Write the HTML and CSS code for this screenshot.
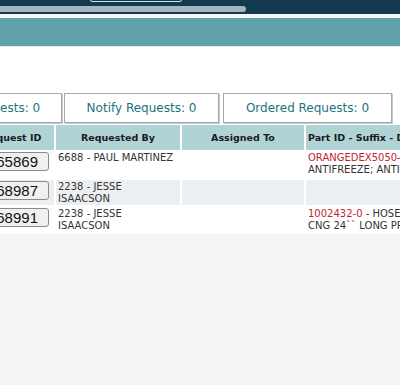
FILE: index.html
```html
<!DOCTYPE html>
<html lang="en">
<head>
    <meta charset="UTF-8">
    <meta name="viewport" content="width=device-width, initial-scale=1.0">
    <title>Part Requests</title>
    <link rel="stylesheet" href="styles.css">
</head>
<body>
    <header class="topbar">
        <div class="search-box"></div>
        <div class="scroll-thumb"></div>
    </header>
    <div class="band"></div>

    <main class="panel">
        <div class="tabs">
            <div class="tab tab-open">Open Requests: 0</div>
            <div class="tab tab-notify">Notify Requests: 0</div>
            <div class="tab tab-ordered">Ordered Requests: 0</div>
        </div>

        <table class="grid">
            <thead>
                <tr>
                    <th class="col-id">Request ID</th>
                    <th class="col-by">Requested By</th>
                    <th class="col-to">Assigned To</th>
                    <th class="col-part">Part ID - Suffix - Description</th>
                </tr>
            </thead>
            <tbody>
                <tr class="row-a">
                    <td><button class="id-btn">65869</button></td>
                    <td>6688 - PAUL MARTINEZ</td>
                    <td></td>
                    <td><span class="part">ORANGEDEX5050-0</span> - COOLANT<br>ANTIFREEZE; ANTIFREEZE</td>
                </tr>
                <tr class="row-b">
                    <td><button class="id-btn">68987</button></td>
                    <td>2238 - JESSE<br>ISAACSON</td>
                    <td></td>
                    <td></td>
                </tr>
                <tr class="row-c">
                    <td><button class="id-btn">68991</button></td>
                    <td>2238 - JESSE<br>ISAACSON</td>
                    <td></td>
                    <td><span class="part">1002432-0</span> - HOSE<br>CNG 24`` LONG PRESSURE</td>
                </tr>
            </tbody>
        </table>
    </main>
</body>
</html>
```

FILE: styles.css
```css
body {
    margin: 0;
    padding: 0;
    background-color: #f4f5f7;
    font-family: "DejaVu Sans", Verdana, sans-serif;
    overflow: hidden;
}

.topbar {
    height: 14px;
    background: #143a4f;
    position: relative;
}

.search-box {
    position: absolute;
    left: 90px;
    top: -10px;
    width: 90px;
    height: 10px;
    border: 1px solid #cfe3e8;
    border-radius: 2px;
}

.scroll-thumb {
    position: absolute;
    left: 0;
    top: 6px;
    width: 246px;
    height: 6px;
    background: #a4b5c1;
    border-radius: 0 3px 3px 0;
}

.band {
    margin-top: 4px;
    height: 28px;
    background: #5fa3a9;
    border-bottom: 1px solid #dcecec;
}

.panel {
    background: #ffffff;
    margin-left: -30px;
    padding-top: 46px;
    width: 560px;
}

/* tabs */
.tabs {
    display: flex;
    margin-left: -58px;
    margin-bottom: 2px;
}

.tab {
    box-sizing: border-box;
    height: 30px;
    line-height: 28px;
    border: 1px solid #a8a8a8;
    box-shadow: 1px 1px 0 #c8c8c8;
    text-align: center;
    color: #22737e;
    font-size: 12px;
}

.tab-open { width: 150px; }
.tab-notify { width: 155px; margin-left: 2px; }
.tab-ordered { width: 169px; margin-left: 4px; }

/* grid */
.grid {
    table-layout: fixed;
    width: 534px;
    border-collapse: separate;
    border-spacing: 2px 0;
    margin-left: -2px;
    font-size: 10px;
    color: #333333;
}

.grid th {
    background: #b0d4d6;
    color: #1a1a1a;
    font-weight: bold;
    font-size: 9.5px;
    height: 25px;
    padding: 0 2px;
    white-space: nowrap;
    overflow: hidden;
}

.col-id { width: 80px; }
.col-by { width: 120px; }
.col-to { width: 118px; }
.col-part { width: 192px; text-align: left; }

.grid td {
    vertical-align: top;
    padding: 2px 2px 0;
    line-height: 12px;
    white-space: nowrap;
    overflow: hidden;
}

.row-a { height: 30px; }
.row-b { height: 25px; }
.row-c { height: 29px; }

.row-b td { background: #eceff2; padding-top: 1px; }
.row-c td { padding-top: 3px; }

.part {
    color: #c0262c;
}

.id-btn {
    width: 77px;
    height: 19px;
    padding: 0 10px 0 0;
    text-align: right;
    font-family: "Liberation Sans", Arial, sans-serif;
    font-size: 15px;
    line-height: 17px;
    color: #111111;
    background: #f0f0f0;
    border: 1px solid #8a8a8a;
    border-radius: 3px;
}
```
